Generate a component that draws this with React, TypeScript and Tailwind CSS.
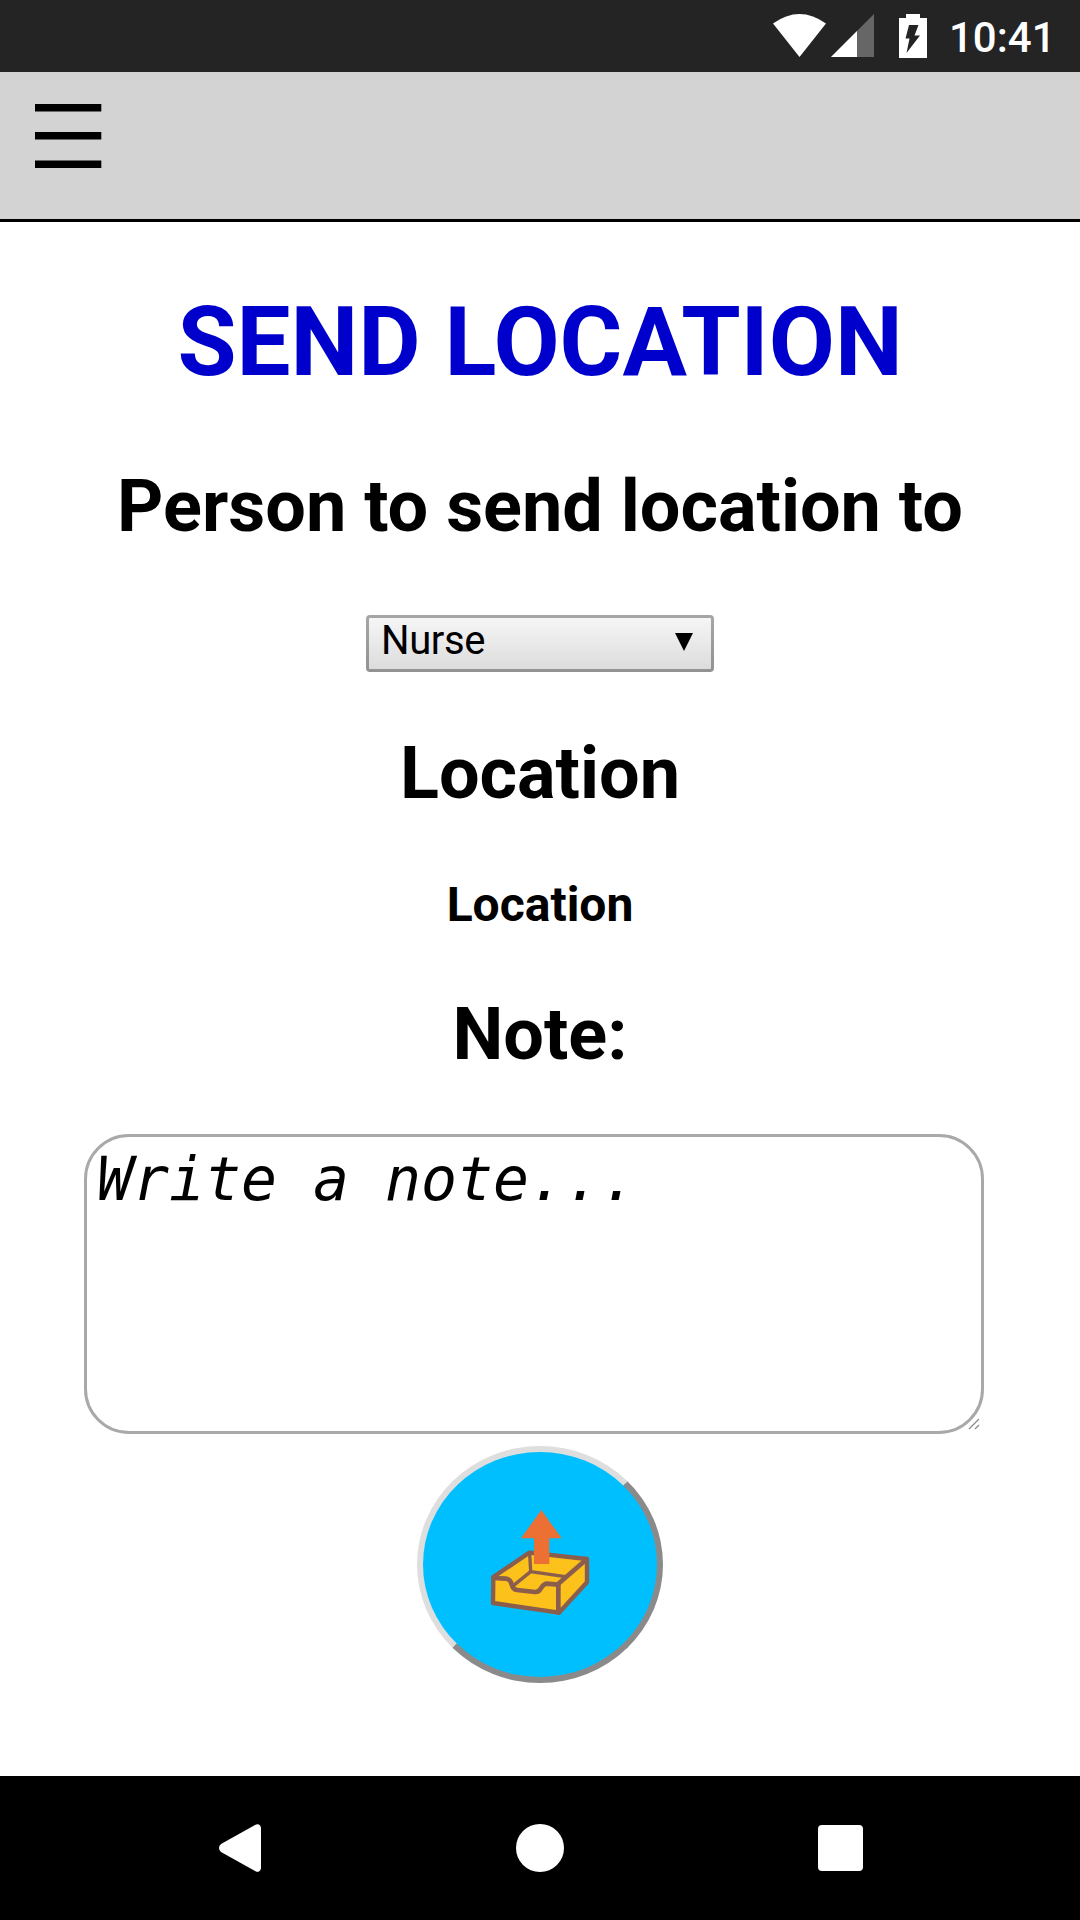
function StatusBar() {
  return (
    <div className="flex h-[72px] items-center justify-end bg-[#242424] text-white">
      <svg className="h-[72px] w-[180px]" viewBox="0 0 180 72">
        <path d="M13 23.5Q39.5 4.500 66 23.500L39.500 57Z" fill="#fff" />
        <path d="M114 14V57H71Z" fill="#666" />
        <path d="M97 31V57H71Z" fill="#fff" />
        <path d="M146 14h14v4h7v40h-28V18h7Z" fill="#fff" />
        <path d="M149 25h9.500l-4 10.500h5.500L146.500 53l3-14.500h-4Z" fill="#242424" />
      </svg>
      <span className="mr-[27px] ml-[9px] w-[104px] pt-1 text-[42px] leading-[72px] font-medium">10:41</span>
    </div>
  );
}

function TrayIcon() {
  return (
    <svg className="mb-[4px] h-[125px] w-[120px] shrink-0" viewBox="0 0 360 375">
      <path
        d="M40 231L148 158L321 177V247L237 338L39 309Z"
        fill="#fdc11b"
        stroke="#8a5d4d"
        strokeWidth="13"
        strokeLinejoin="round"
      />
      <g fill="none" stroke="#8a5d4d" strokeLinejoin="round" strokeLinecap="round">
        <path d="M149 160L152 215L256 230M152 215L100 257" strokeWidth="10" />
        <path d="M320 178L235 251V338" strokeWidth="14" />
        <path
          d="M40 234L77 236Q91 237 95 253Q99 269 111 270L165 276Q176 277 182 266Q191 252 200 251L235 254"
          strokeWidth="14"
        />
      </g>
      <path d="M184 30L245 115H208V192H162V115H123Z" fill="#ec6f33" />
    </svg>
  );
}

function NavBar() {
  return (
    <div className="flex h-[144px] items-center justify-between bg-black pr-[217px] pl-[219px]">
      <svg className="h-12 w-[42px]" viewBox="0 0 42 48" fill="#fff">
        <path d="M36.500 .800Q38 -.300 40 .500Q42 1.500 42 4V44Q42 46.500 40 47.500Q38 48.300 36.500 47.200L2 28Q0 26.500 0 24Q0 21.500 2 20Z" />
      </svg>
      <div className="ml-[1px] size-12 rounded-full bg-white" />
      <div className="h-[46px] w-[45px] rounded-[4px] bg-white" />
    </div>
  );
}

export default function App() {
  return (
    <div className="flex h-[1920px] w-[1080px] flex-col bg-white font-['Roboto',sans-serif] text-black">
      <StatusBar />
      <header className="h-[150px] border-b-[3px] border-black bg-[#d3d3d3] pt-8 pl-[34.5px]">
        <svg className="h-16 w-[67px]" viewBox="0 0 67 64">
          <path d="M0 0H66.300V7.500H0ZM0 28H66.300V35.500H0ZM0 56.500H66.300V64H0Z" />
        </svg>
      </header>
      <main className="flex flex-1 flex-col items-center">
        <h1 className="mt-16 text-[96px] leading-[112px] font-bold text-[#0000cd]">SEND LOCATION</h1>
        <h2 className="mt-[67px] text-[72px] leading-[84px] font-bold">Person to send location to</h2>
        <button className="mt-[66px] h-[57px] w-[348px] rounded-[4px] bg-linear-to-b from-[#a6a6a6] to-[#929292] p-[3px]">
          <span className="flex h-full items-start justify-between rounded-[1px] bg-linear-to-b from-[#f6f6f6] to-[#dcdcdc] pr-[18px] pl-[12px]">
            <span className="text-[40px] leading-[46px] tracking-[-0.4px]">Nurse</span>
            <svg className="mt-[15px] h-[18px] w-[18px]" viewBox="0 0 18 18">
              <path d="M0 0H18L9 18Z" />
            </svg>
          </span>
        </button>
        <h2 className="mt-[60px] text-[72px] leading-[84px] font-bold">Location</h2>
        <h5 className="mt-[61px] text-[48px] leading-[56px] font-bold">Location</h5>
        <h2 className="mt-[60px] text-[72px] leading-[84px] font-bold">Note:</h2>
        <div className="relative mt-[57px] mr-[12px] h-[300px] w-[900px]">
          <textarea
            className="block h-full w-full resize-none rounded-[45px] border-[3px] border-[#a9a9a9] bg-white px-[10px] py-[7px] font-['DejaVu_Sans_Mono',monospace] text-[59.8px] leading-[70px] italic outline-none placeholder:text-black placeholder:opacity-100"
            placeholder="Write a note..."
          />
          <svg className="absolute right-[4px] bottom-[4px] h-[12px] w-[12px]" viewBox="0 0 12 12" stroke="#888" strokeWidth="1.200">
            <path d="M1 11L11 1M7 11L11 7" />
          </svg>
        </div>
        <button className="mt-[12px] flex h-[237px] w-[246px] items-center justify-center rounded-[50%] border-[6px] border-t-[#dedede] border-r-[#8a8a8a] border-b-[#8a8a8a] border-l-[#dedede] bg-[#00bfff]">
          <TrayIcon />
        </button>
      </main>
      <NavBar />
    </div>
  );
}
